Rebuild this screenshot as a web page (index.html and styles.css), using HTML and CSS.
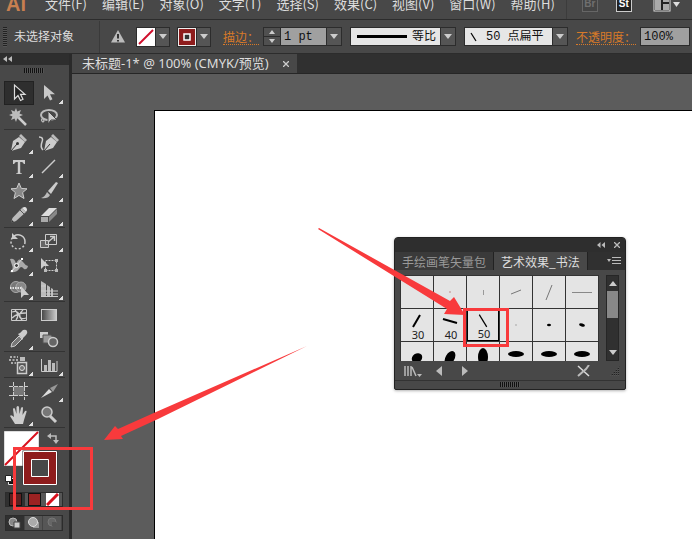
FILE: index.html
```html
<!DOCTYPE html>
<html lang="zh-CN">
<head>
  <meta charset="UTF-8" />
  <meta name="viewport" content="width=device-width, initial-scale=1.0" />
  <title>未标题-1</title>
  <link rel="stylesheet" href="styles.css">
</head>
<body>
  <header class="menubar">
    <div class="logo">Ai</div>
    <nav>
      <a href="#">文件(F)</a>
      <a href="#">编辑(E)</a>
      <a href="#">对象(O)</a>
      <a href="#">文字(T)</a>
      <a href="#">选择(S)</a>
      <a href="#">效果(C)</a>
      <a href="#">视图(V)</a>
      <a href="#">窗口(W)</a>
      <a href="#">帮助(H)</a>
    </nav>
    <div class="apps">
      <button class="app dim">Br</button>
      <button class="app">St</button>
      <button class="layout-button" aria-label="Layout">
        <svg width="28" height="18" viewBox="0 0 28 18">
          <rect x="1" y="1" width="16" height="15" fill="#222" stroke="#ddd"/>
          <path d="M2 2h6v13H2zM10 2h6v5h-6zM10 9h6v6h-6z" fill="#aaa"/>
          <path d="M20 7h7l-3.500 5z" fill="#ddd"/>
        </svg>
      </button>
    </div>
  </header>

  <div class="controlbar">
    <span class="grip"></span>
    <span class="status">未选择对象</span>
    <svg class="warning" width="14" height="13" viewBox="0 0 14 13">
      <path d="M7 0L14 12.500H0z" fill="#bbb"/>
      <path d="M7 4v4.500M7 10v1.500" stroke="#333" stroke-width="2"/>
    </svg>
    <div class="picker">
      <button class="swatch" aria-label="Fill">
        <svg width="18" height="18" viewBox="0 0 18 18"><rect width="18" height="18" fill="#fff"/><path d="M2 16L16 2" stroke="#d00f2c" stroke-width="2"/></svg>
      </button>
      <button class="arrow" aria-label="Fill list"></button>
    </div>
    <div class="picker">
      <button class="swatch" aria-label="Stroke">
        <svg width="18" height="18" viewBox="0 0 18 18"><rect x=".5" y=".5" width="17" height="17" fill="#8e1c1c" stroke="#eee"/><rect x="6" y="6" width="6" height="6" fill="#333" stroke="#fff" stroke-width="1.500"/></svg>
      </button>
      <button class="arrow" aria-label="Stroke list"></button>
    </div>
    <label class="orange" for="weight">描边：</label>
    <div class="field weight">
      <div class="spinner">
        <button class="up" aria-label="Up"></button>
        <button class="down" aria-label="Down"></button>
      </div>
      <input type="text" id="weight" value="1 pt">
      <button class="arrow" aria-label="Weights"></button>
    </div>
    <div class="field profile">
      <svg width="56" height="17" viewBox="0 0 56 17"><path d="M6 8.500h50" stroke="#000" stroke-width="3"/></svg>
      <select aria-label="Profile"><option>等比</option></select>
      <span class="arrow"></span>
    </div>
    <div class="field brush">
      <svg width="16" height="17" viewBox="0 0 16 17"><path d="M6 5l5 8" stroke="#000" stroke-width="1.200"/></svg>
      <select aria-label="Brush"><option>50 点扁平</option></select>
      <span class="arrow"></span>
    </div>
    <label class="orange" for="opacity">不透明度：</label>
    <div class="field opacity">
      <input type="text" id="opacity" value="100%">
    </div>
  </div>

  <main class="workspace">
    <aside class="tools">
      <div class="tools-head">
        <button class="collapse" aria-label="Collapse"><svg width="9" height="6" viewBox="0 0 9 6"><path d="M4 0v6L0 3zM9 0v6L5 3z" fill="#bbb"/></svg></button>
      </div>
      <div class="hgrip"></div>

      <div class="group">
        <button class="tool selected" aria-label="Selection"><svg viewBox="0 0 30 24"><path d="M10.500 4v14l3.500-3.500 2.500 5 2.500-1.200-2.500-5H21z" fill="#222" stroke="#ddd" stroke-width="1.200"/></svg></button>
        <button class="tool more" aria-label="Direct selection"><svg viewBox="0 0 30 24"><path d="M10 4v14l3.500-3.500 2.500 5 2.500-1.200-2.500-5H21z" fill="#c8c8c8"/></svg></button>
        <button class="tool" aria-label="Magic wand"><svg viewBox="0 0 30 24"><path d="M12 3l1.200 3.500L17 5l-1.500 3.500L19 10l-3.500 1.500L17 15l-3.800-1.500L12 17l-1.500-3.500L7 15l1.500-3.500L5 10l3.500-1.500L7 5l3.500 1.500z" fill="#bbb"/><path d="M15 13l7 7" stroke="#ccc" stroke-width="2.500"/></svg></button>
        <button class="tool" aria-label="Lasso"><svg viewBox="0 0 30 24" fill="none"><ellipse cx="15" cy="10" rx="8" ry="5" stroke="#bbb" stroke-width="2"/><path d="M9 13q-3 2 0 4 2-1 0-3" stroke="#bbb" stroke-width="1.300"/><path d="M14 6v13l3-4h6z" fill="#ccc" stroke="#444"/></svg></button>
      </div>

      <div class="group">
        <button class="tool more" aria-label="Pen"><svg viewBox="0 0 30 24"><path d="M7 20l2-10 6-4 6 5-4 6z" fill="#ccc"/><path d="M15 5l2-2 6 6-2 2z" fill="#bbb"/><path d="M7 20l6-7" stroke="#333"/><circle cx="13.500" cy="12.500" r="1.500" fill="#333"/></svg></button>
        <button class="tool" aria-label="Curvature"><svg viewBox="0 0 30 24"><path d="M10 20l2-10 5-4 6 5-4 6z" fill="#ccc"/><path d="M17 5l2-2 6 6-2 2z" fill="#bbb"/><path d="M10 20l6-7" stroke="#333"/><path d="M5 6q5 0 3 5t1 8" stroke="#ccc" stroke-width="1.500" fill="none"/></svg></button>
        <button class="tool more" aria-label="Type"><svg viewBox="0 0 30 24"><path d="M9 5h12v4h-1.200q-.5-2-2.300-2H16.200v10.500q0 1 1.800 1V19h-6v-.5q1.800 0 1.800-1V7H12.500q-1.800 0-2.300 2H9z" fill="#ccc"/></svg></button>
        <button class="tool more" aria-label="Line"><svg viewBox="0 0 30 24"><path d="M8 18L21 5" stroke="#ccc" stroke-width="1.500"/></svg></button>
        <button class="tool more" aria-label="Star"><svg viewBox="0 0 30 24"><path d="M15 4l2.300 5.400 5.700.4-4.400 3.800 1.400 5.900-5-3.100-5 3.100 1.400-5.900L7 9.800l5.700-.4z" fill="#888" stroke="#ccc"/></svg></button>
        <button class="tool more" aria-label="Paintbrush"><svg viewBox="0 0 30 24"><path d="M22 3l2 1-7 11-3-3z" fill="#ccc"/><path d="M13 13l3 3q-2 4-9 3 4-1 6-6z" fill="#bbb"/></svg></button>
        <button class="tool more" aria-label="Pencil"><svg viewBox="0 0 30 24"><path d="M7 20l1.500-5L18 5l4 4-10 9z" fill="#bbb"/><path d="M18 5q3-2 4.500 0T22 9z" fill="#e0e0e0"/><path d="M7 20l1-3 2 2z" fill="#333"/><path d="M16 7l4 4" stroke="#555"/></svg></button>
        <button class="tool more" aria-label="Eraser"><svg viewBox="0 0 30 24"><path d="M7 13l8-8h8l-8 8z" fill="#ddd"/><path d="M7 14h7v5H7z" fill="#aaa"/><path d="M15 14l8-8v5l-8 8z" fill="#888"/></svg></button>
      </div>

      <div class="group">
        <button class="tool more" aria-label="Rotate"><svg viewBox="0 0 30 24" fill="none"><path d="M10 7a7 7 0 0 1 11 6" stroke="#ccc" stroke-width="1.500"/><path d="M21 13a7 7 0 1 1-12-5" stroke="#ccc" stroke-width="1.500" stroke-dasharray="2 2"/><path d="M8 4v6h6z" fill="#ccc"/></svg></button>
        <button class="tool more" aria-label="Scale"><svg viewBox="0 0 30 24" fill="none" stroke="#ccc"><path d="M6.500 11.500h8v7h-8z" fill="#666"/><path d="M11.500 5.500h11v10h-11z"/><path d="M14 13l6-5M16 7.500h4.500V12" stroke-width="1.500"/></svg></button>
        <button class="tool more" aria-label="Width"><svg viewBox="0 0 30 24" fill="none"><path d="M6 6q5-1 6 5 3-8 7-2 2 3 5 4-1 4-4 3-3-4-5 0-3 4-9 3 4-3 2-7z" fill="#aaa"/><path d="M8 18l10-12" stroke="#ddd"/><circle cx="12.500" cy="12.500" r="2" fill="#444" stroke="#fff"/><path d="M7 17h2v2H7zM17 5h2v2h-2z" fill="#fff"/></svg></button>
        <button class="tool" aria-label="Free transform"><svg viewBox="0 0 30 24"><path d="M11.500 7.500h11v10h-11z" fill="none" stroke="#ccc" stroke-dasharray="2 1"/><path d="M7 5v11l3-3 5 0z" fill="#ccc"/><path d="M21 6h3v3h-3zM21 16h3v3h-3zM10 16h3v3h-3z" fill="#bbb"/></svg></button>
        <button class="tool more" aria-label="Shape builder"><svg viewBox="0 0 30 24"><circle cx="12" cy="10" r="5.500" fill="#777" stroke="#aaa"/><circle cx="17" cy="10" r="5" fill="#888" stroke="#aaa"/><path d="M6 11h12" stroke="#fff" stroke-width="1.500" stroke-dasharray="1.500 1"/><path d="M17 9v12l3-3 5 0z" fill="#ccc"/></svg></button>
        <button class="tool more" aria-label="Perspective grid"><svg viewBox="0 0 30 24"><path d="M7 4l5 3v12H7zM13 8l3 2v9h-3zM17 11l2 1v7h-2z" fill="#bbb"/><path d="M7 9h5M7 14h17M12 17h12M7 19.500h17" stroke="#ccc"/></svg></button>
      </div>

      <div class="group">
        <button class="tool" aria-label="Mesh"><svg viewBox="0 0 30 24" fill="none" stroke="#ccc"><path d="M7.500 6.500h15v11h-15z"/><path d="M8 9q6-2 7 3t7 3M8 15q5-5 14-5M11 7q5 5 1 10M19 7q-6 5-1 10" stroke-width="1.300"/></svg></button>
        <button class="tool" aria-label="Gradient"><svg viewBox="0 0 30 24"><defs><linearGradient id="gr"><stop stop-color="#444"/><stop offset="1" stop-color="#ccc"/></linearGradient></defs><rect x="7.500" y="6.500" width="15" height="11" fill="url(#gr)" stroke="#ccc"/></svg></button>
        <button class="tool more" aria-label="Eyedropper"><svg viewBox="0 0 30 24"><path d="M7 20l1-4 7-7 3 3-7 7z" fill="#777" stroke="#ccc"/><path d="M14 7l2-1 3-3q3-1 4 1t-1 4l-3 3v2z" fill="#ccc"/></svg></button>
        <button class="tool" aria-label="Blend"><svg viewBox="0 0 30 24"><path d="M6 5h8v6H6z" fill="#ccc"/><path d="M9 8h8l2 3-5 5H9z" fill="#999" stroke="#555"/><circle cx="19" cy="15" r="4.500" fill="#666" stroke="#ccc" stroke-width="1.500"/></svg></button>
      </div>

      <div class="group">
        <button class="tool more" aria-label="Symbol sprayer"><svg viewBox="0 0 30 24"><path d="M13.500 9.500h9v11h-9z" fill="#555" stroke="#ccc" stroke-width="1.500"/><path d="M16 4h5v4h-5z" fill="#bbb"/><circle cx="18" cy="15" r="2.500" stroke="#ddd" fill="#777"/><path d="M6 4h8M5 7h9M7 10h5" stroke="#ccc" stroke-width="1.500" stroke-dasharray="2 1.500"/></svg></button>
        <button class="tool more" aria-label="Graph"><svg viewBox="0 0 30 24"><path d="M7.500 6v12.500H23V8" stroke="#ccc" fill="none"/><path d="M10 12h3v6h-3zM14 7h3v11h-3zM18 10h3v8h-3z" fill="#bbb"/></svg></button>
      </div>

      <div class="group">
        <button class="tool" aria-label="Artboard"><svg viewBox="0 0 30 24"><path d="M9.500 7.500h11v9h-11z" fill="#777"/><path d="M9.500 3v18M20.500 3v18M5 7.500h20M5 16.500h20" stroke="#ccc" stroke-dasharray="4 1"/></svg></button>
        <button class="tool more" aria-label="Slice"><svg viewBox="0 0 30 24"><path d="M7 19l8-9 3 3z" fill="#ddd"/><path d="M16 9l8-4-5 8z" fill="#999"/></svg></button>
        <button class="tool more" aria-label="Hand"><svg viewBox="0 0 30 24"><path d="M11 21l-5-8q1-2 4 1L9 6q1-2 2 0l1.500 5V4q1.500-2 2.500 0l.5 7L17 5q1.500-2 2 0l-.5 7L21 8q2-1 1.500 1L20 17l-1 4z" fill="#ccc"/></svg></button>
        <button class="tool" aria-label="Zoom"><svg viewBox="0 0 30 24"><path d="M16 13l6 6" stroke="#ccc" stroke-width="3"/><circle cx="13" cy="9" r="5" fill="#777" stroke="#ccc" stroke-width="1.500"/></svg></button>
      </div>

      <div class="colors">
        <svg width="60" height="56" viewBox="0 0 60 56">
          <path d="M.5 1.500h34v34H.5z" fill="#fff" stroke="#ddd"/>
          <path d="M1 35L34 2" stroke="#d8101c" stroke-width="2"/>
          <path d="M18.500 20.500h35v34h-35z" fill="#333"/>
          <path d="M19.500 21.500h33v33h-33z" fill="#8e1c1c" stroke="#fff"/>
          <path d="M27.500 29.500h17v17h-17z" fill="#484848" stroke="#fff"/>
          <path d="M46 6h6v5" fill="none" stroke="#bbb" stroke-width="1.500"/>
          <path d="M43 6l4-3v6zM52 14l-3-4h6z" fill="#bbb"/>
          <path d="M4.500 48.500h6v6h-6z" fill="#111" stroke="#ddd"/>
          <path d="M1.500 45.500h6v6h-6z" fill="#fff" stroke="#222"/>
        </svg>
      </div>
      <div class="strip">
        <button class="on" aria-label="Color"><span class="chip dark"></span></button>
        <button aria-label="Red"><span class="chip red"></span></button>
        <button aria-label="None"><svg width="13" height="13" viewBox="0 0 13 13"><path d="M0 0h13v13H0z" fill="#fff"/><path d="M1 12L12 1" stroke="#d8101c" stroke-width="3"/></svg></button>
      </div>
      <div class="strip modes">
        <button class="on" aria-label="Draw normal"><svg width="14" height="12" viewBox="0 0 14 12"><circle cx="5" cy="5" r="4" fill="#888" stroke="#bbb"/><path d="M6 5h6v6H6z" fill="#ccc" stroke="#444"/></svg></button>
        <button aria-label="Draw behind"><svg width="14" height="12" viewBox="0 0 14 12"><path d="M6 5h6v6H6z" fill="#999"/><circle cx="6" cy="5" r="4.500" fill="#aaa" stroke="#ddd"/></svg></button>
        <button aria-label="Draw inside"><svg width="14" height="12" viewBox="0 0 14 12"><circle cx="7" cy="5" r="4" fill="#666" stroke="#777"/><path d="M7 5h4v4H7z" fill="#555"/></svg></button>
      </div>
    </aside>

    <section class="document">
      <div class="doc-tabs">
        <div class="doc-tab">未标题-1* @ 100% (CMYK/预览)<button aria-label="Close"><svg width="6" height="6" viewBox="0 0 6 6"><path d="M0 0l6 6M6 0L0 6" stroke="#ccc" stroke-width="1.300"/></svg></button></div>
      </div>
      <div class="canvas">
        <div class="artboard"></div>
      </div>
    </section>
  </main>

  <section class="panel">
    <div class="panel-head">
      <button aria-label="Collapse panel"><svg width="8" height="6" viewBox="0 0 8 6"><path d="M3.500 0v6L0 3zM8 0v6L4.500 3z" fill="#bbb"/></svg></button>
      <button aria-label="Close panel"><svg width="6" height="6" viewBox="0 0 6 6"><path d="M0 0l6 6M6 0L0 6" stroke="#bbb" stroke-width="1.300"/></svg></button>
    </div>
    <div class="panel-tabs">
      <button class="tab">手绘画笔矢量包</button>
      <button class="tab active">艺术效果_书法</button>
      <button class="panel-menu" aria-label="Panel menu"><svg width="14" height="8" viewBox="0 0 14 8"><path d="M0 2h4L2 5z" fill="#bbb"/><path d="M5 .5h9M5 3.500h9M5 6.500h9" stroke="#bbb"/></svg></button>
    </div>
    <div class="panel-body">
      <div class="brushes">
        <button class="cell" aria-label="1"></button>
        <button class="cell" aria-label="2"><svg viewBox="0 0 32 32"><circle cx="16" cy="16" r="1" fill="#caa"/></svg></button>
        <button class="cell" aria-label="3"><svg viewBox="0 0 32 32"><path d="M16.500 14v5" stroke="#999"/></svg></button>
        <button class="cell" aria-label="4"><svg viewBox="0 0 32 32"><path d="M11 18l10-4" stroke="#777"/></svg></button>
        <button class="cell" aria-label="5"><svg viewBox="0 0 32 32"><path d="M13 24l6-15" stroke="#777"/></svg></button>
        <button class="cell" aria-label="6"><svg viewBox="0 0 32 32"><path d="M6 16.500h20" stroke="#888"/></svg></button>
        <button class="cell"><svg viewBox="0 0 32 32"><path d="M12 18l7-12" stroke="#000" stroke-width="2"/></svg><span>30</span></button>
        <button class="cell"><svg viewBox="0 0 32 32"><path d="M9 10l14 4" stroke="#000" stroke-width="2"/></svg><span>40</span></button>
        <button class="cell chosen"><svg viewBox="0 0 32 32"><path d="M12 5l8 13" stroke="#000" stroke-width="1.300"/></svg><span>50</span></button>
        <button class="cell" aria-label="10"><svg viewBox="0 0 32 32"><circle cx="16" cy="16" r="1" fill="#bbb"/></svg></button>
        <button class="cell" aria-label="11"><svg viewBox="0 0 32 32"><ellipse cx="16" cy="16" rx="2" ry="1.200"/></svg></button>
        <button class="cell" aria-label="12"><svg viewBox="0 0 32 32"><ellipse cx="16" cy="16" rx="3" ry="1.600" transform="rotate(15 16 16)"/></svg></button>
        <button class="cell" aria-label="13"><svg viewBox="0 0 32 32"><ellipse cx="16" cy="16" rx="5.500" ry="4.500" transform="rotate(-35 16 16)"/></svg></button>
        <button class="cell" aria-label="14"><svg viewBox="0 0 32 32"><ellipse cx="16" cy="16" rx="7.500" ry="4.500" transform="rotate(-60 16 16)"/></svg></button>
        <button class="cell" aria-label="15"><svg viewBox="0 0 32 32"><ellipse cx="16" cy="15" rx="5" ry="9"/></svg></button>
        <button class="cell" aria-label="16"><svg viewBox="0 0 32 32"><ellipse cx="16" cy="12" rx="8" ry="3"/></svg></button>
        <button class="cell" aria-label="17"><svg viewBox="0 0 32 32"><ellipse cx="16" cy="12" rx="8" ry="3"/></svg></button>
        <button class="cell" aria-label="18"><svg viewBox="0 0 32 32"><ellipse cx="16" cy="12" rx="8" ry="3"/></svg></button>
      </div>
      <div class="scroll">
        <button class="up" aria-label="Scroll up"></button>
        <div class="thumb"></div>
        <button class="down" aria-label="Scroll down"></button>
      </div>
    </div>
    <div class="panel-foot">
      <button aria-label="Libraries"><svg width="18" height="12" viewBox="0 0 18 12"><path d="M1 1v10M4 1v10M7 1v10M8 2l4 9" stroke="#bbb" stroke-width="1.500"/><path d="M13 9h5l-2.500 3z" fill="#bbb"/></svg></button>
      <button aria-label="Previous"><svg width="6" height="10" viewBox="0 0 6 10"><path d="M6 0v10L0 5z" fill="#bbb"/></svg></button>
      <button aria-label="Next"><svg width="6" height="10" viewBox="0 0 6 10"><path d="M0 0v10l6-5z" fill="#bbb"/></svg></button>
      <button class="remove" aria-label="Remove brush"><svg width="13" height="12" viewBox="0 0 13 12"><path d="M1 1l11 10" stroke="#ddd" stroke-width="1.500"/><path d="M1 11L9 4l3-4" stroke="#bbb" stroke-width="2" fill="none"/></svg></button>
      <span class="resize"></span>
    </div>
    <div class="panel-grip"><span class="hgrip"></span></div>
  </section>

  <div class="mark mark-color"></div>
  <div class="mark mark-brush"></div>
  <svg class="pointer pointer-brush" width="150" height="92" viewBox="0 0 150 92"><path d="M1 0L132 73l4-4 11 18-21-1 3-5L0 1z" fill="#f83a3c"/></svg>
  <svg class="pointer pointer-color" width="204" height="96" viewBox="0 0 204 96"><path d="M203 0L52 66 14 83l-3-3L0 94l19-1-2-3L54 73z" fill="#f83a3c"/></svg>
</body>
</html>
```

FILE: styles.css
```css
* {
  box-sizing: border-box;
}

body {
  margin: 0;
  height: 100vh;
  overflow: hidden;
  display: flex;
  flex-direction: column;
  position: relative;
  font-family: "Noto Sans CJK SC", sans-serif;
  font-size: 12px;
  background-color: #484848;
  color: #ddd;
}

button, input, select {
  font: inherit;
  color: inherit;
  border: none;
  border-radius: 0;
  padding: 0;
  margin: 0;
  background: none;
}

svg {
  display: block;
  flex-shrink: 0;
}

/* menu bar, its upper part runs off the window */
.menubar {
  display: flex;
  align-items: center;
  flex-shrink: 0;
  height: 31px;
  margin-top: -11px;
  border-bottom: 1px solid #2c2c2c;
  background-color: #484848;
}

.logo {
  flex-shrink: 0;
  width: 45px;
  padding-left: 6px;
  font-family: "Liberation Sans", sans-serif;
  font-size: 20px;
  font-weight: bold;
  line-height: 20px;
  color: #c87f50;
}

nav {
  display: flex;
  gap: 15px;
}

nav a {
  font-size: 13px;
  line-height: 16px;
  color: #ddd;
  text-decoration: none;
  white-space: nowrap;
}

.apps {
  display: flex;
  align-items: center;
  gap: 18px;
  height: 30px;
  margin-left: 11px;
  padding-left: 15px;
  border-left: 1px solid #3c3c3c;
}

.app {
  width: 16px;
  height: 16px;
  border: 1px solid #ccc;
  background-color: #222;
  font-family: "Liberation Sans", sans-serif;
  font-size: 10px;
  font-weight: bold;
  line-height: 14px;
  color: #fff;
}

.app.dim {
  border-color: #666;
  background-color: #444;
  color: #707070;
}

.layout-button {
  margin-left: 3px;
}

/* control bar */
.controlbar {
  display: flex;
  align-items: center;
  flex-shrink: 0;
  height: 34px;
  padding: 0 2px 0 3px;
  border-bottom: 1px solid #2c2c2c;
}

.grip {
  width: 4px;
  height: 20px;
  background: repeating-linear-gradient(#222 0 1px, #555 1px 2px);
}

.status {
  width: 93px;
  height: 32px;
  line-height: 30px;
  padding-left: 7px;
  border-right: 1px solid #3a3a3a;
  white-space: nowrap;
}

.warning {
  margin: 0 11px;
}

.picker {
  display: flex;
  height: 20px;
  margin-right: 7px;
  border: 1px solid #2c2c2c;
}

.arrow {
  display: flex;
  align-items: center;
  justify-content: center;
  flex-shrink: 0;
  width: 15px;
  background-color: #555;
  border-left: 1px solid #2c2c2c;
}

.picker .arrow {
  width: 14px;
}

.arrow::before, .down::before {
  content: "";
  border: 4px solid transparent;
  border-top: 5px solid #ccc;
  border-bottom: none;
}

.orange {
  margin-right: 4px;
  color: #d87a28;
  line-height: 15px;
  border-bottom: 1px dotted #d87a28;
  white-space: nowrap;
}

.picker + .orange {
  margin-left: 5px;
}

.field {
  display: flex;
  flex-shrink: 0;
  height: 19px;
  margin-right: 8px;
  border: 1px solid #2c2c2c;
  background-color: #e6e6e6;
  color: #111;
}

.field select {
  appearance: none;
  flex: 1;
  min-width: 0;
  font-family: "Liberation Mono", "Noto Sans CJK SC", monospace;
}

.field input {
  width: 100%;
  min-width: 0;
  padding-left: 3px;
  background-color: #a0a0a0;
  font-family: "Liberation Mono", monospace;
}

.weight {
  width: 79px;
}

.profile {
  width: 106px;
}

.profile select {
  padding-left: 5px;
}

.brush {
  width: 104px;
}

.brush select {
  padding-left: 5px;
}

.opacity {
  flex: 1;
  margin: 0;
}

.spinner {
  display: flex;
  flex-direction: column;
  flex-shrink: 0;
  width: 17px;
  background-color: #505050;
  border-right: 1px solid #2c2c2c;
}

.up, .down {
  display: flex;
  flex: 1;
  align-items: center;
  justify-content: center;
}

.up::before {
  content: "";
  border: 3px solid transparent;
  border-bottom: 4px solid #ccc;
  border-top: none;
}

.spinner .down {
  border-top: 1px solid #2c2c2c;
}

.down::before {
  border-width: 4px 3px 0;
}

/* tools */
.workspace {
  display: flex;
  flex: 1;
  min-height: 0;
}

.tools {
  display: flex;
  flex-direction: column;
  width: 72px;
  flex-shrink: 0;
  border-right: 3px solid #2a2a2a;
  background-color: #484848;
}

.tools-head {
  display: flex;
  align-items: center;
  height: 12px;
  padding-left: 3px;
  background-color: #2e2e2e;
}

.hgrip {
  width: 20px;
  height: 5px;
  background: repeating-linear-gradient(90deg, #111 0 1px, #555 1px 2px);
}

.tools > .hgrip {
  margin: 3px 0 8px 24px;
}

.group {
  display: grid;
  grid-template-columns: 30px 30px;
  grid-auto-rows: 24px;
  margin: 0 4px 1px;
  border-bottom: 1px solid #333;
}

.tool svg {
  width: 30px;
  height: 24px;
}

.selected {
  background-color: #2e2e2e;
  box-shadow: inset 0 0 0 1px #222;
}

.more {
  background: linear-gradient(135deg, transparent 50%, #ddd 50%) 25px 19px / 4px 4px no-repeat;
}

.colors {
  margin: 1px 0 6px 4px;
}

.strip {
  display: flex;
  width: 58px;
  height: 17px;
  margin: 0 0 8px 5px;
  border: 1px solid #2c2c2c;
  background-color: #565656;
}

.strip button {
  display: flex;
  flex: 1;
  align-items: center;
  justify-content: center;
}

.strip .on {
  background-color: #303030;
}

.modes button {
  border-right: 1px solid #444;
}

.chip {
  width: 13px;
  height: 13px;
  border: 1px solid #111;
  background-color: #9c2222;
}

.chip.dark {
  background-color: #5c2020;
}

/* document */
.document {
  display: flex;
  flex-direction: column;
  flex: 1;
  min-width: 0;
}

.doc-tabs {
  display: flex;
  height: 20px;
  background-color: #303030;
  border-bottom: 1px solid #262626;
}

.doc-tab {
  display: flex;
  align-items: center;
  justify-content: space-between;
  width: 225px;
  padding: 0 8px 0 10px;
  background-color: #484848;
  font-family: "Noto Sans", "Noto Sans CJK SC", sans-serif;
  font-size: 13px;
  line-height: 19px;
  white-space: nowrap;
}

.canvas {
  display: flex;
  flex: 1;
  padding: 36px 0 0 82px;
  background-color: #5c5c5c;
}

.artboard {
  flex: 1;
  border: 1px solid #000;
  border-width: 1px 0 0 1px;
  background-color: #fff;
}

/* floating brush library */
.panel {
  position: absolute;
  left: 394px;
  top: 237px;
  width: 232px;
  border: 1px solid #222;
  border-radius: 4px 4px 2px 2px;
  background-color: #484848;
  box-shadow: 0 1px 3px rgba(0, 0, 0, 0.3);
  overflow: hidden;
}

.panel-head {
  display: flex;
  align-items: center;
  justify-content: flex-end;
  gap: 9px;
  height: 14px;
  padding-right: 5px;
  background-color: #2e2e2e;
}

.panel-tabs {
  display: flex;
  height: 18px;
  background-color: #303030;
}

.tab {
  padding: 0 7px;
  line-height: 17px;
  background-color: #3a3a3a;
  color: #999;
  border-right: 1px solid #222;
  white-space: nowrap;
}

.tab.active {
  background-color: #484848;
  color: #ddd;
}

.panel-menu {
  margin-left: auto;
  padding-right: 4px;
}

.panel-body {
  display: flex;
  justify-content: space-between;
  height: 92px;
  padding: 5px 6px 0 5px;
}

.brushes {
  display: grid;
  grid-template-columns: repeat(6, 32px);
  grid-auto-rows: 32px;
  gap: 1px;
  height: 86px;
  padding: 1px;
  overflow: hidden;
  background-color: #333;
}

.cell {
  display: grid;
  background-color: #e4e4e4;
  color: #222;
}

.cell svg, .cell span {
  grid-area: 1 / 1;
}

.cell svg {
  width: 32px;
  height: 32px;
}

.cell span {
  align-self: end;
  justify-self: center;
  padding-left: 2px;
  font-family: "Noto Sans", sans-serif;
  font-size: 11px;
  line-height: 12px;
}

.chosen {
  border: 1px solid #000;
}

.chosen svg {
  width: 30px;
  height: 30px;
}

.scroll {
  display: flex;
  flex-direction: column;
  width: 13px;
  height: 86px;
  background-color: #303030;
  border: 1px solid #262626;
}

.scroll .up, .scroll .down {
  flex: none;
  height: 15px;
}

.scroll .down {
  margin-top: auto;
}

.scroll .up::before {
  border-width: 0 4px 5px;
}

.scroll .down::before {
  border-width: 5px 4px 0;
}

.thumb {
  height: 27px;
  background-color: #888;
}

.panel-foot {
  display: flex;
  align-items: center;
  gap: 20px;
  height: 18px;
  padding-left: 9px;
}

.panel-foot button:first-child {
  margin-right: -6px;
}

.remove {
  margin-left: auto;
}

.resize {
  width: 15px;
  height: 10px;
  background: repeating-linear-gradient(90deg, transparent 0 1px, #484848 1px 2px), repeating-linear-gradient(#222 0 1px, #555 1px 2px);
  clip-path: polygon(10px 0, 10px 100%, 0 100%);
}

.panel-grip {
  display: flex;
  justify-content: center;
  padding: 1px 0 2px;
  border-top: 1px solid #333;
}

/* red notes over the screen */
.mark {
  position: absolute;
  border: 3px solid #f83a3c;
}

.mark-color {
  left: 13px;
  top: 447px;
  width: 80px;
  height: 63px;
}

.mark-brush {
  left: 463px;
  top: 308px;
  width: 46px;
  height: 39px;
}

.pointer {
  position: absolute;
}

.pointer-brush {
  left: 318px;
  top: 228px;
}

.pointer-color {
  left: 104px;
  top: 346px;
}
```
